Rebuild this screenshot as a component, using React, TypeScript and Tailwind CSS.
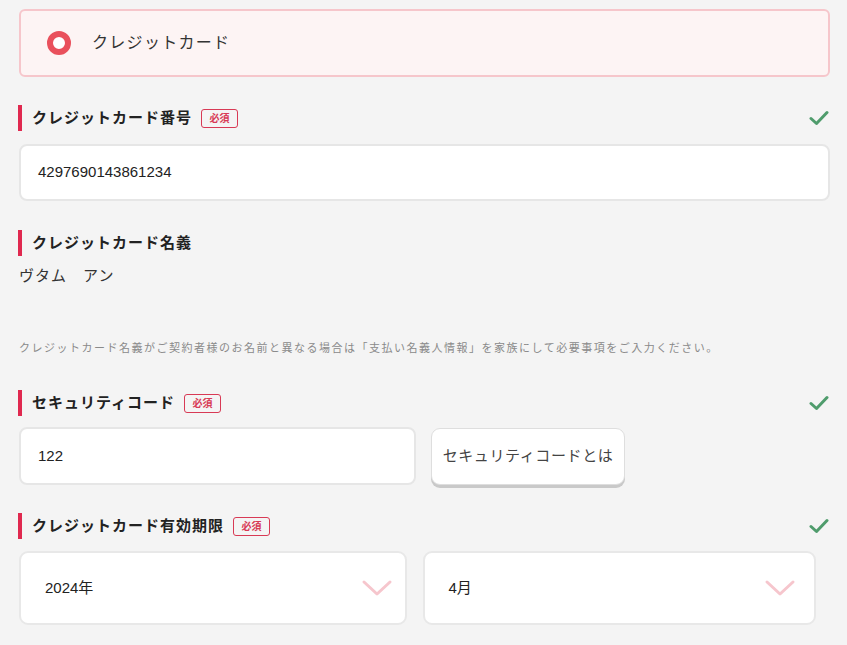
import React from "react";

const font = { fontFamily: '"Liberation Sans", "Noto Sans CJK JP", sans-serif' };

function Check() {
  return (
    <svg width="20" height="16" viewBox="0 0 20 16" className="mr-[1px]">
      <path d="M2 8.5 L7.5 13.5 L18 2.5" fill="none" stroke="#4f9c6c" strokeWidth="3" strokeLinecap="round" strokeLinejoin="round" />
    </svg>
  );
}

function Badge() {
  return (
    <span className="ml-[9px] inline-flex h-[19px] w-[37px] items-center justify-center rounded-[3px] border border-[#d83a55] text-[10px] font-bold text-[#d83a55] tracking-[0px]">
      必須
    </span>
  );
}

function Heading({ label, required, check }: { label: string; required?: boolean; check?: boolean }) {
  return (
    <div className="flex h-[26px] items-center justify-between">
      <div className="flex h-full items-center border-l-4 border-[#e0294f] pl-[10px]">
        <span className="text-[15px] font-bold tracking-[1px] text-[#222]">{label}</span>
        {required && <Badge />}
      </div>
      {check && <Check />}
    </div>
  );
}

function Chevron() {
  return (
    <svg width="32" height="18" viewBox="0 0 32 18">
      <path d="M3 3 L16 15 L29 3" fill="none" stroke="#f6c6cd" strokeWidth="3" strokeLinecap="round" strokeLinejoin="round" />
    </svg>
  );
}

export default function App() {
  return (
    <div className="min-h-[645px] w-[847px] bg-[#f4f4f4] pl-[19px] pr-[17px] pt-[9px]" style={font}>
      <div className="flex h-[68px] items-center rounded-[6px] border-2 border-[#f6c6cb] bg-[#fdf4f4] pl-[26px]">
        <span className="h-[24px] w-[24px] rounded-full border-[6px] border-[#e9505c] bg-white" />
        <span className="ml-[21px] text-[16px] tracking-[1.3px] text-[#333]">クレジットカード</span>
      </div>

      <div className="mt-[28px] -ml-[1px]">
        <Heading label="クレジットカード番号" required check />
      </div>
      <div className="mt-[13px] flex h-[57px] items-center rounded-[8px] border-2 border-[#e6e6e6] bg-white pl-[17px] text-[15px] text-[#222]">
        4297690143861234
      </div>

      <div className="mt-[29px] -ml-[1px]">
        <Heading label="クレジットカード名義" />
      </div>
      <div className="mt-[9px] text-[15px] tracking-[1px] text-[#333]">ヴタム　アン</div>

      <div className="mt-[52px] text-[11px] tracking-[1.5px] text-[#8a8a8a]">
        クレジットカード名義がご契約者様のお名前と異なる場合は「支払い名義人情報」を家族にして必要事項をご入力ください。
      </div>

      <div className="mt-[34px] -ml-[1px]">
        <Heading label="セキュリティコード" required check />
      </div>
      <div className="mt-[11px] flex items-center gap-[15px]">
        <div className="flex h-[58px] w-[397px] items-center rounded-[8px] border-2 border-[#e6e6e6] bg-white pl-[17px] text-[15px] text-[#222]">
          122
        </div>
        <button className="flex h-[57px] w-[194px] items-center justify-center rounded-[9px] border border-[#dedede] bg-white text-[15px] tracking-[0.6px] text-[#444] shadow-[0_3px_0_#c9c9c9]">
          セキュリティコードとは
        </button>
      </div>

      <div className="mt-[28px] -ml-[1px]">
        <Heading label="クレジットカード有効期限" required check />
      </div>
      <div className="mt-[12px] flex gap-[16px] pr-[14px]">
        <div className="flex h-[74px] flex-1 items-center justify-between rounded-[9px] border-2 border-[#e8e8e8] bg-white pl-[24px] pr-[12px] text-[15px] text-[#222]">
          <span>2024年</span>
          <Chevron />
        </div>
        <div className="flex h-[74px] flex-1 items-center justify-between rounded-[9px] border-2 border-[#e8e8e8] bg-white pl-[24px] pr-[18px] text-[15px] text-[#222]">
          <span>4月</span>
          <Chevron />
        </div>
      </div>
    </div>
  );
}
